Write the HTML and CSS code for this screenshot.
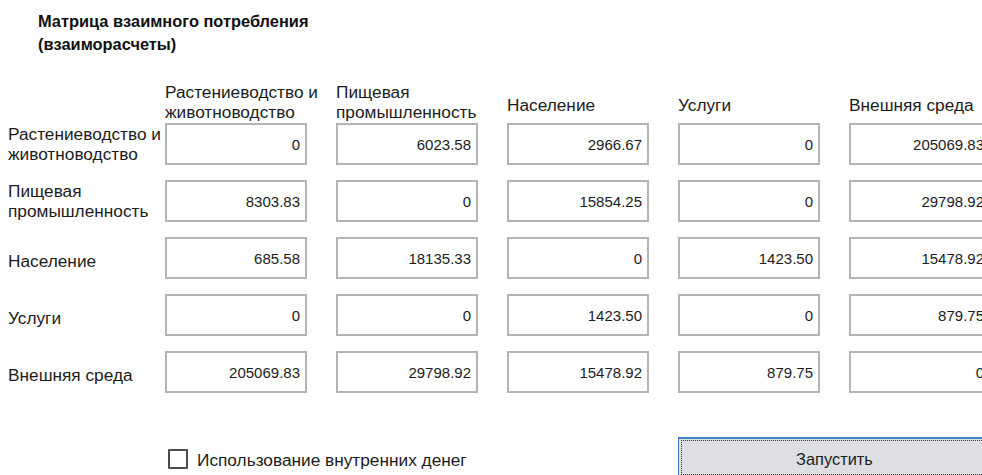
FILE: index.html
```html
<!DOCTYPE html>
<html lang="ru">
<head>
<meta charset="utf-8">
<title>Матрица взаимного потребления</title>
<link rel="stylesheet" href="styles.css">
</head>
<body>
<div class="panel">
  <h1 class="title">Матрица взаимного потребления<br>(взаиморасчеты)</h1>

  <div class="grid colheads">
    <div class="corner"></div>
    <div class="colhead">Растениеводство и<br>животноводство</div>
    <div class="colhead">Пищевая<br>промышленность</div>
    <div class="colhead one">Население</div>
    <div class="colhead one">Услуги</div>
    <div class="colhead one">Внешняя среда</div>
  </div>

  <div class="grid matrix">
    <div class="rowhead">Растениеводство и<br>животноводство</div>
    <div class="cell"><input class="num" type="text" value="0"></div>
    <div class="cell"><input class="num" type="text" value="6023.58"></div>
    <div class="cell"><input class="num" type="text" value="2966.67"></div>
    <div class="cell"><input class="num" type="text" value="0"></div>
    <div class="cell"><input class="num" type="text" value="205069.83"></div>

    <div class="rowhead">Пищевая<br>промышленность</div>
    <div class="cell"><input class="num" type="text" value="8303.83"></div>
    <div class="cell"><input class="num" type="text" value="0"></div>
    <div class="cell"><input class="num" type="text" value="15854.25"></div>
    <div class="cell"><input class="num" type="text" value="0"></div>
    <div class="cell"><input class="num" type="text" value="29798.92"></div>

    <div class="rowhead one">Население</div>
    <div class="cell"><input class="num" type="text" value="685.58"></div>
    <div class="cell"><input class="num" type="text" value="18135.33"></div>
    <div class="cell"><input class="num" type="text" value="0"></div>
    <div class="cell"><input class="num" type="text" value="1423.50"></div>
    <div class="cell"><input class="num" type="text" value="15478.92"></div>

    <div class="rowhead one">Услуги</div>
    <div class="cell"><input class="num" type="text" value="0"></div>
    <div class="cell"><input class="num" type="text" value="0"></div>
    <div class="cell"><input class="num" type="text" value="1423.50"></div>
    <div class="cell"><input class="num" type="text" value="0"></div>
    <div class="cell"><input class="num" type="text" value="879.75"></div>

    <div class="rowhead one">Внешняя среда</div>
    <div class="cell"><input class="num" type="text" value="205069.83"></div>
    <div class="cell"><input class="num" type="text" value="29798.92"></div>
    <div class="cell"><input class="num" type="text" value="15478.92"></div>
    <div class="cell"><input class="num" type="text" value="879.75"></div>
    <div class="cell"><input class="num" type="text" value="0"></div>
  </div>

  <div class="grid footer">
    <label class="check">
      <span class="box"></span>
      <span class="check-label">Использование внутренних денег</span>
    </label>
    <button class="run" type="button">Запустить</button>
  </div>
</div>
</body>
</html>
```

FILE: styles.css
```css
html {
  overflow: hidden;
}

body {
  margin: 8px 0 0 8px;
  background: #ffffff;
  color: #1c1c1c;
  font-family: "Liberation Sans", Arial, sans-serif;
  font-size: 17.25px;
}

/* the matrix is wider than the window; its last column is cut at the edge */
.panel {
  overflow: hidden;
}

.title {
  margin: 2px 0 0 30px;
  font-size: 16.4px;
  line-height: 23px;
  font-weight: bold;
  color: #111111;
}

/* label column + five value columns; each value column holds a 142px field */
.grid {
  display: grid;
  grid-template-columns: 157px repeat(5, 171px);
  width: 1012px;
}

.colheads {
  margin-top: 26px;
  height: 40px;
  margin-bottom: 1px;
}

.colhead {
  display: flex;
  align-items: center;
  line-height: 20px;
  white-space: nowrap;
}

.colhead.one {
  padding-top: 6px;
}

.matrix {
  grid-auto-rows: 42px;
  row-gap: 15px;
}

.rowhead {
  display: flex;
  align-items: center;
  line-height: 20px;
  white-space: nowrap;
}

.rowhead.one {
  padding-top: 6px;
}

.cell {
  display: flex;
}

.num {
  box-sizing: border-box;
  width: 142px;
  height: 42px;
  margin: 0;
  padding: 0 5px 0 4px;
  border: 2px solid #b4b4b4;
  border-radius: 0;
  background: #ffffff;
  color: #1c1c1c;
  font-family: "Liberation Sans", Arial, sans-serif;
  font-size: 15px;
  text-align: right;
  outline: none;
}

.footer {
  margin-top: 44px;
  align-items: start;
}

.check {
  grid-column: 2 / 5;
  display: flex;
  align-items: center;
  gap: 9px;
  margin-left: 3px;
  margin-top: 11px;
}

.box {
  box-sizing: border-box;
  width: 20px;
  height: 20px;
  border: 2px solid #4d4d4d;
  border-radius: 1px;
  background: #ffffff;
}

.check-label {
  line-height: 20px;
  padding-top: 2px;
}

/* focused push button: blue frame with a dotted focus ring inside */
.run {
  grid-column: 5 / 7;
  box-sizing: border-box;
  width: 313px;
  height: 41px;
  margin: 0;
  border: 1px solid #3b78b5;
  border-top: 2px solid #3f86c8;
  border-radius: 0;
  background: #dedfe3;
  color: #1c1c1c;
  font-family: "Liberation Sans", Arial, sans-serif;
  font-size: 16.4px;
  outline: 1px dotted #3a3a3a;
  outline-offset: -4px;
  padding: 3px 0 0;
}
```
